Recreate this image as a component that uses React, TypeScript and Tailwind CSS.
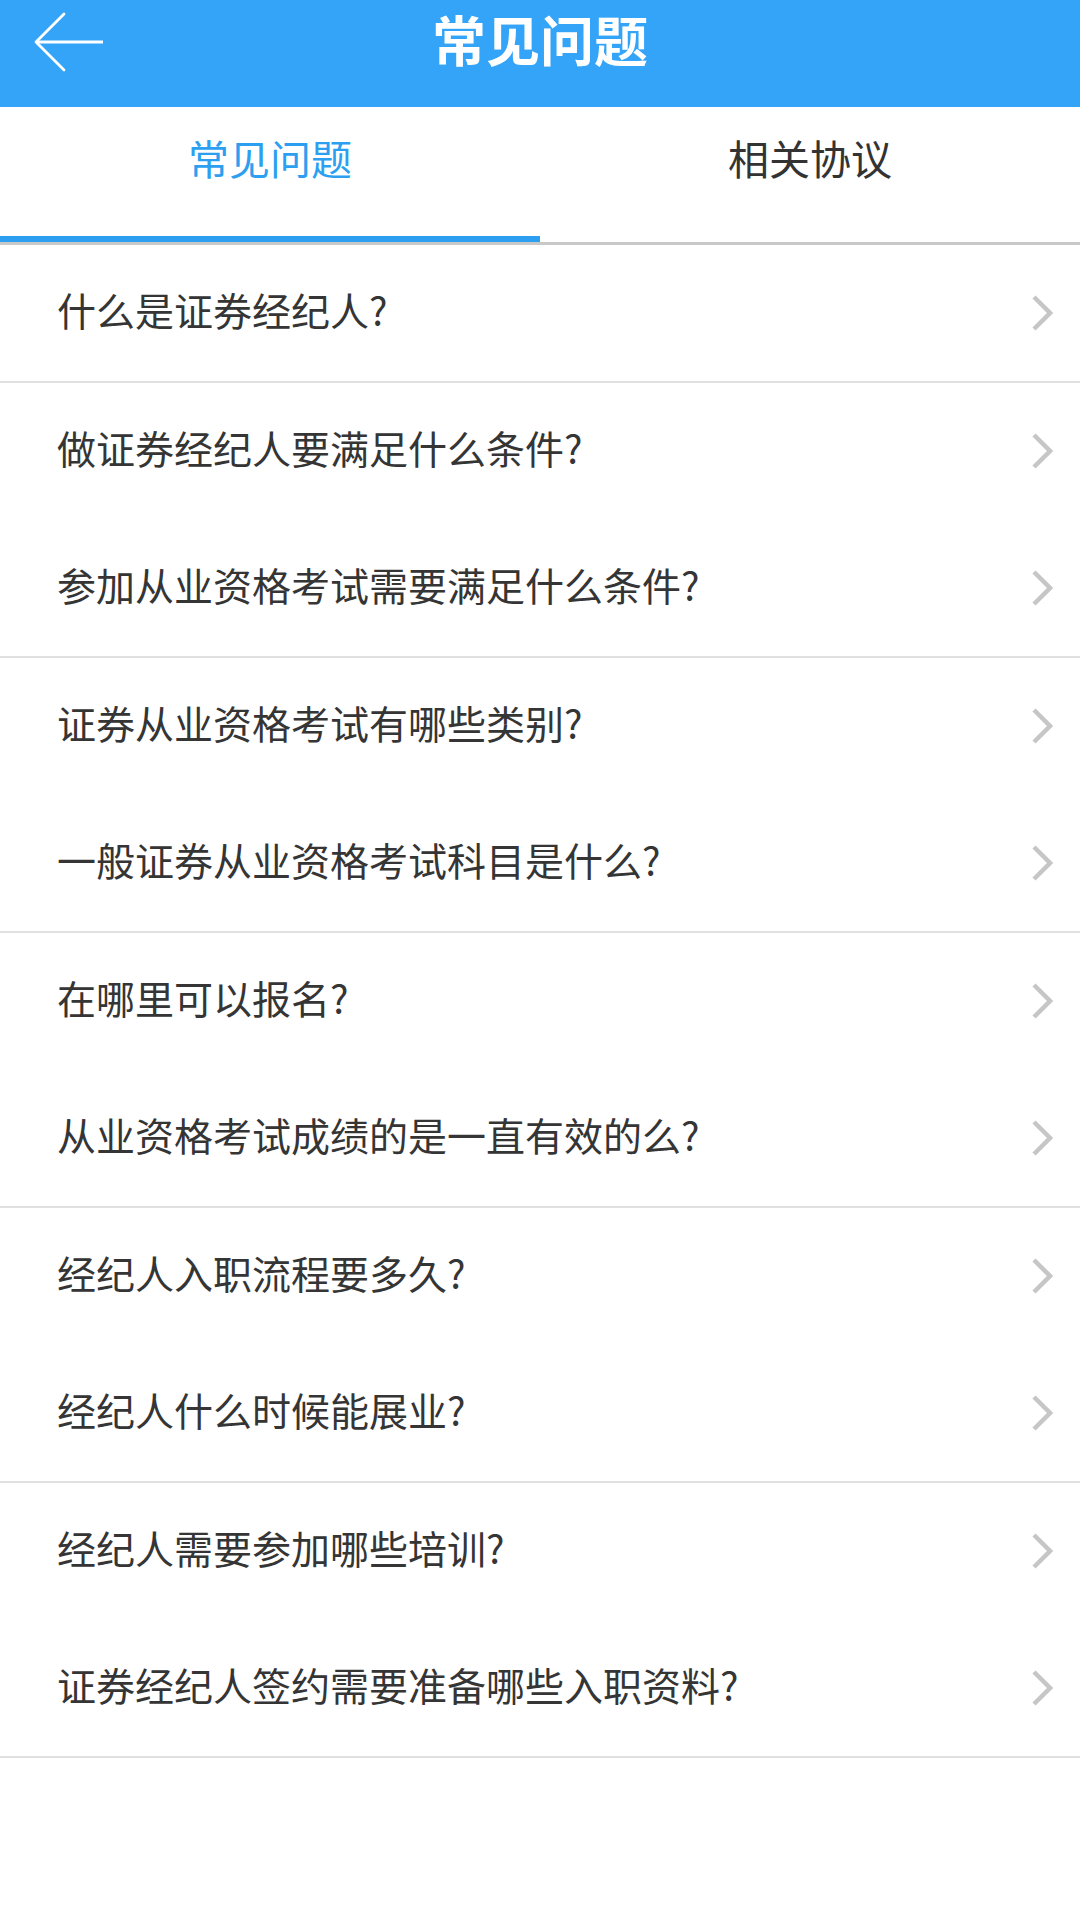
import React from "react";

const questions = [
  "什么是证券经纪人?",
  "做证券经纪人要满足什么条件?",
  "参加从业资格考试需要满足什么条件?",
  "证券从业资格考试有哪些类别?",
  "一般证券从业资格考试科目是什么?",
  "在哪里可以报名?",
  "从业资格考试成绩的是一直有效的么?",
  "经纪人入职流程要多久?",
  "经纪人什么时候能展业?",
  "经纪人需要参加哪些培训?",
  "证券经纪人签约需要准备哪些入职资料?",
];

function BackArrow() {
  return (
    <svg width="72" height="62" viewBox="0 0 72 62" fill="none">
      <polyline
        points="31,2 3,30 31,58"
        stroke="white"
        strokeWidth="2.8"
        strokeLinecap="round"
        strokeLinejoin="round"
      />
      <line x1="4" y1="30" x2="70" y2="30" stroke="white" strokeWidth="2.8" />
    </svg>
  );
}

function Chevron() {
  return (
    <svg width="22" height="36" viewBox="0 0 22 36" fill="none">
      <polyline
        points="3,2 19,18 3,34"
        stroke="#c6c6c6"
        strokeWidth="4.5"
        strokeLinejoin="miter"
      />
    </svg>
  );
}

export default function App() {
  return (
    <div
      className="w-[1080px] h-[1920px] bg-white overflow-hidden"
      style={{ fontFamily: '"Noto Sans CJK SC", "Noto Sans", sans-serif' }}
    >
      {/* Header */}
      <div className="relative h-[107px] bg-[#33a4f8] flex justify-center">
        <button className="absolute left-[33px] top-[12px]">
          <BackArrow />
        </button>
        <h1 className="pt-[12px] text-[54px] leading-[54px] font-bold text-white">
          常见问题
        </h1>
      </div>

      {/* Tabs */}
      <div className="flex h-[129px]">
        <div className="flex-1 flex justify-center pt-[30px]">
          <span className="text-[41px] leading-[41px] text-[#2c9ff0]">常见问题</span>
        </div>
        <div className="flex-1 flex justify-center pt-[30px]">
          <span className="text-[41px] leading-[41px] text-[#333333]">相关协议</span>
        </div>
      </div>
      <div className="flex h-[6px]">
        <div className="w-1/2 bg-[#2c9ff0]" />
      </div>
      <div className="h-[3px] bg-[#c8c8c8]" />

      {/* Questions */}
      <div className="flex flex-col">
        {questions.map((q, i) => (
          <div
            key={q}
            className={
              i % 2 === 0
                ? "h-[137.5px] flex items-center justify-between pl-[57px] pr-[27px] border-b-2 border-[#e0e0e0]"
                : "h-[137.5px] flex items-center justify-between pl-[57px] pr-[27px]"
            }
          >
            <span className="mb-[8px] text-[39px] leading-[46px] text-[#353535]">{q}</span>
            <Chevron />
          </div>
        ))}
      </div>
    </div>
  );
}
